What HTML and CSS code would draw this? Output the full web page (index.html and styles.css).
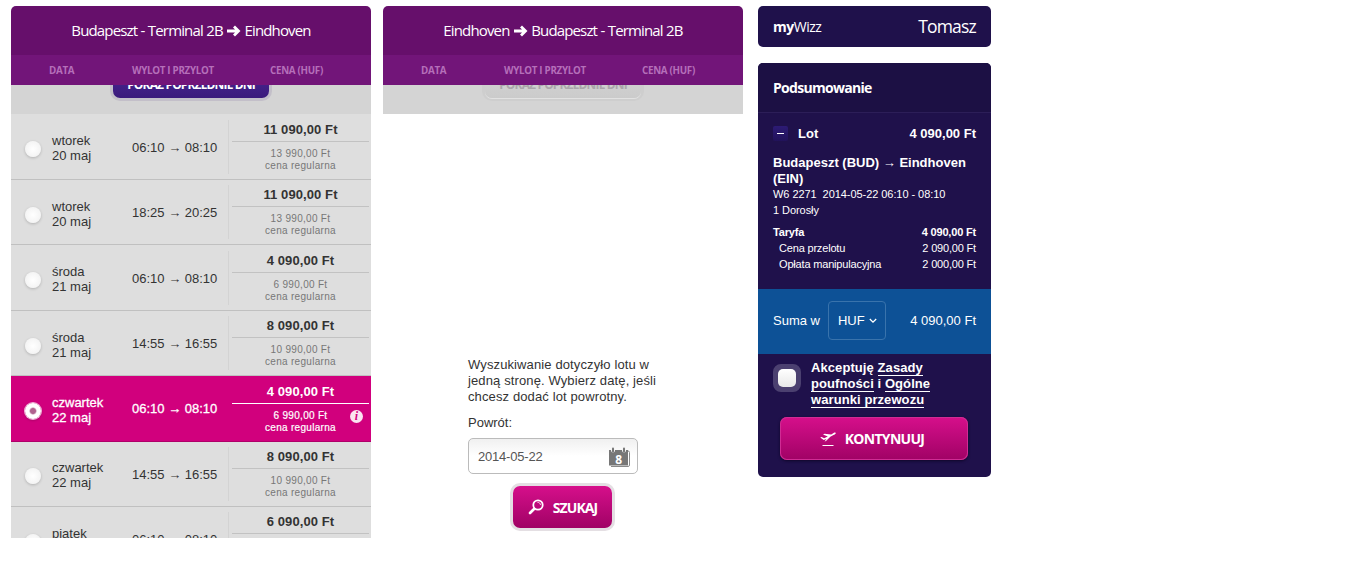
FILE: index.html
```html
<!DOCTYPE html>
<html lang="pl">
<head>
    <meta charset="UTF-8">
    <title>Wizz Air</title>
    <link rel="stylesheet" href="styles.css">
</head>
<body>
    <div class="page">
        <div class="flights">
            <div class="flights-title">Budapeszt - Terminal 2B <svg class="arrow" viewBox="0 0 15 12"><path d="M1 6h11M8 1.500L12.500 6L8 10.500"/></svg> Eindhoven</div>
            <div class="flights-head">
                <span class="head-date">DATA</span>
                <span class="head-time">WYLOT I PRZYLOT</span>
                <span class="head-price">CENA (HUF)</span>
            </div>
            <div class="prev-days">
                <button class="prev-button">POKAŻ POPRZEDNIE DNI</button>
            </div>
            <div class="flight-list">
                <div class="flight">
                    <span class="radio"></span>
                    <div class="date">wtorek<br>20 maj</div>
                    <div class="time">06:10 → 08:10</div>
                    <div class="price"><strong>11 090,00 Ft</strong><div class="regular">13 990,00 Ft<br>cena regularna</div></div>
                </div>
                <div class="flight">
                    <span class="radio"></span>
                    <div class="date">wtorek<br>20 maj</div>
                    <div class="time">18:25 → 20:25</div>
                    <div class="price"><strong>11 090,00 Ft</strong><div class="regular">13 990,00 Ft<br>cena regularna</div></div>
                </div>
                <div class="flight">
                    <span class="radio"></span>
                    <div class="date">środa<br>21 maj</div>
                    <div class="time">06:10 → 08:10</div>
                    <div class="price"><strong>4 090,00 Ft</strong><div class="regular">6 990,00 Ft<br>cena regularna</div></div>
                </div>
                <div class="flight">
                    <span class="radio"></span>
                    <div class="date">środa<br>21 maj</div>
                    <div class="time">14:55 → 16:55</div>
                    <div class="price"><strong>8 090,00 Ft</strong><div class="regular">10 990,00 Ft<br>cena regularna</div></div>
                </div>
                <div class="flight selected">
                    <span class="radio"></span>
                    <div class="date">czwartek<br>22 maj</div>
                    <div class="time">06:10 → 08:10</div>
                    <div class="price"><strong>4 090,00 Ft</strong><div class="regular">6 990,00 Ft<br>cena regularna</div><span class="info">i</span></div>
                </div>
                <div class="flight">
                    <span class="radio"></span>
                    <div class="date">czwartek<br>22 maj</div>
                    <div class="time">14:55 → 16:55</div>
                    <div class="price"><strong>8 090,00 Ft</strong><div class="regular">10 990,00 Ft<br>cena regularna</div></div>
                </div>
                <div class="flight">
                    <span class="radio"></span>
                    <div class="date">piątek</div>
                    <div class="time">06:10 → 08:10</div>
                    <div class="price"><strong>6 090,00 Ft</strong></div>
                </div>
            </div>
        </div>

        <div class="flights">
            <div class="flights-title">Eindhoven <svg class="arrow" viewBox="0 0 15 12"><path d="M1 6h11M8 1.500L12.500 6L8 10.500"/></svg> Budapeszt - Terminal 2B</div>
            <div class="flights-head">
                <span class="head-date">DATA</span>
                <span class="head-time">WYLOT I PRZYLOT</span>
                <span class="head-price">CENA (HUF)</span>
            </div>
            <div class="prev-days">
                <button class="prev-button disabled">POKAŻ POPRZEDNIE DNI</button>
            </div>
            <div class="return-form">
                <p>Wyszukiwanie dotyczyło lotu w<br>jedną stronę. Wybierz datę, jeśli<br>chcesz dodać lot powrotny.</p>
                <label>Powrót:</label>
                <div class="date-input">
                    <span>2014-05-22</span>
                    <svg class="calendar" viewBox="0 0 22 20">
                        <path d="M3 4h17a1.500 1.500 0 0 1 1.500 1.500V18a1.500 1.500 0 0 1-1.500 1.500H3" fill="#fff" stroke="#8a8a8a"/>
                        <rect x="1" y="3" width="19" height="15.500" fill="#777"/>
                        <path d="M3 0v3.500a2 2 0 0 0 4 0V0zM14 0v3.500a2 2 0 0 0 4 0V0z" fill="#f6f6f6"/>
                        <path d="M5 1.500v3M16 1.500v3" stroke="#777" stroke-width="2" stroke-linecap="round"/>
                        <text x="10.500" y="16.500" text-anchor="middle">8</text>
                    </svg>
                </div>
                <button class="pink-button search-button">
                    <svg class="magnifier" viewBox="0 0 16 16"><circle cx="10" cy="6" r="4.700"/><path class="handle" d="M6 10L2 14"/><path class="shine" d="M9.500 3.500a2.500 2.500 0 0 1 3 2.500"/></svg>
                    <span>SZUKAJ</span>
                </button>
            </div>
        </div>

        <div class="sidebar">
            <div class="user-bar">
                <span class="my-wizz"><b>my</b>Wizz</span>
                <span class="user-name">Tomasz</span>
            </div>
            <div class="summary">
                <div class="summary-title">Podsumowanie</div>
                <div class="summary-body">
                    <div class="summary-flight">
                        <span class="toggle"></span>
                        <span class="flight-label">Lot</span>
                        <span class="flight-total">4 090,00 Ft</span>
                    </div>
                    <div class="route">Budapeszt (BUD) → Eindhoven (EIN)</div>
                    <div class="details">W6 2271&nbsp; 2014-05-22 06:10 - 08:10<br>1 Dorosły</div>
                    <div class="fares">
                        <div class="fare main"><span>Taryfa</span><span>4 090,00 Ft</span></div>
                        <div class="fare"><span>Cena przelotu</span><span>2 090,00 Ft</span></div>
                        <div class="fare"><span>Opłata manipulacyjna</span><span>2 000,00 Ft</span></div>
                    </div>
                </div>
                <div class="total">
                    <span>Suma w</span>
                    <div class="currency">HUF <svg viewBox="0 0 8 6"><path d="M0.800 1L4 4.200L7.200 1"/></svg></div>
                    <span class="total-price">4 090,00 Ft</span>
                </div>
                <div class="terms">
                    <span class="checkbox"></span>
                    <div class="terms-text">Akceptuję <a>Zasady</a><br><a>poufności</a> i <a>Ogólne</a><br><a>warunki przewozu</a></div>
                </div>
                <button class="pink-button continue-button">
                    <svg class="plane" viewBox="0 0 16 14"><path d="M.2 5.400l1.500-.4 2.400 1.300L7.800 4.500 3 2.600l1.600-.8 6.600.7L13.600 1c1.200-.7 2.400-.5 2.200.2-.2.700-1.200 1.300-2.300 1.900L10.300 4.800 6 9l-1.400.6L6.400 6.900 3.700 8z"/><path d="M2.500 13h11v1h-11z"/></svg>
                    <span>KONTYNUUJ</span>
                </button>
            </div>
        </div>
    </div>
</body>
</html>
```
FILE: styles.css
```css
body {
    margin: 0;
    background-color: #fff;
    font-family: "Liberation Sans", Arial, sans-serif;
    font-size: 13px;
    color: #333;
}

button {
    border: none;
    padding: 0;
    font-family: "Open Sans", sans-serif;
    font-weight: bold;
    white-space: nowrap;
}

.page {
    display: flex;
    align-items: flex-start;
    padding: 6px 0 0 11px;
}

.flights {
    width: 360px;
    margin-right: 12px;
}

.flights-title {
    height: 49px;
    line-height: 49px;
    border-radius: 5px 5px 0 0;
    background-color: #660f6b;
    color: #fff;
    font-family: "Open Sans", sans-serif;
    font-size: 15px;
    letter-spacing: -0.85px;
    word-spacing: 0.3px;
    text-align: center;
    white-space: nowrap;
}

.arrow {
    width: 15px;
    height: 12px;
    vertical-align: -1px;
    fill: none;
    stroke: #fff;
    stroke-width: 2.8;
}

.flights-head {
    display: flex;
    height: 30px;
    line-height: 31px;
    background-color: #721579;
    color: #b56fb9;
    font-family: "Open Sans", sans-serif;
    font-size: 9.8px;
    font-weight: bold;
    letter-spacing: -0.3px;
    white-space: nowrap;
}

.head-date {
    width: 83px;
    padding-left: 38px;
}

.head-time {
    width: 138px;
}

.prev-days {
    display: flex;
    justify-content: center;
    align-items: flex-end;
    height: 13px;
    padding-bottom: 16px;
    overflow: hidden;
    background-color: #d4d4d4;
}

.prev-button {
    flex-shrink: 0;
    width: 156px;
    height: 38px;
    padding-top: 10px;
    border-radius: 7px;
    background: linear-gradient(#512d9c, #3a1a7c);
    box-shadow: 0 0 0 3px #c3bfc9;
    color: #fff;
    font-size: 12px;
    letter-spacing: -0.85px;
}

.prev-button.disabled {
    background: linear-gradient(#d8d8d8, #cbcbcb);
    box-shadow: 0 1px 0 #e2e2e2, 0 0 0 3px #cecece;
    color: #aaa6aa;
}

.flight-list {
    box-sizing: border-box;
    height: 424px;
    padding-top: 0.7px;
    background-color: #dedede;
    overflow: hidden;
}

.flight {
    display: flex;
    align-items: center;
    box-sizing: border-box;
    height: 65.4px;
    border-bottom: 1px solid #c0c0c0;
    background-color: #dedede;
}

.flight:last-child {
    align-items: flex-start;
}

.radio {
    box-sizing: border-box;
    width: 16px;
    height: 16px;
    margin: 5px 11px 0 14px;
    border-radius: 50%;
    background: radial-gradient(#fff, #efefef);
    box-shadow: 0 1px 3px rgba(0, 0, 0, 0.2);
}

.flight:last-child .radio {
    margin-top: 27px;
}

.date {
    width: 80px;
    padding-top: 3px;
    line-height: 15px;
}

.flight:last-child .date {
    padding-top: 19px;
}

.time {
    width: 96px;
    height: 54px;
    line-height: 56px;
    border-right: 1px solid #d3d3d3;
    white-space: nowrap;
}

.flight:last-child .time {
    margin-top: 5px;
}

.price {
    position: relative;
    width: 137px;
    height: 64px;
    margin: -1.8px 0 0 3px;
    text-align: center;
    white-space: nowrap;
}

.flight:last-child .price {
    margin-top: -0.7px;
}

.price strong {
    display: block;
    height: 27px;
    line-height: 31px;
    border-bottom: 1px solid #c2c2c2;
    letter-spacing: 0.1px;
}

.regular {
    padding-top: 6px;
    color: #777;
    font-size: 10px;
    letter-spacing: 0.3px;
    line-height: 12px;
}

.selected {
    background-color: #d1007d;
    border-bottom-color: #b00069;
    color: #fff;
}

.selected .date {
    -webkit-text-stroke: 0.3px #fff;
}

.selected .time {
    border-right-color: transparent;
    -webkit-text-stroke: 0.3px #fff;
}

.selected .radio {
    background: radial-gradient(#b0628f 0 2.500px, #fff 4px);
    box-shadow: 0 0 0 1px #f0b5d8, 0 1px 3px rgba(0, 0, 0, 0.3);
}

.selected strong {
    border-bottom-color: #fff;
}

.selected .regular {
    color: #fff;
    -webkit-text-stroke: 0.2px #fff;
}

.info {
    position: absolute;
    right: 6px;
    top: 34px;
    width: 13px;
    height: 13px;
    border-radius: 50%;
    background-color: #fbe3f1;
    color: #d1007d;
    font-family: "Liberation Serif", serif;
    font-size: 12px;
    font-style: italic;
    font-weight: bold;
    line-height: 13px;
}

.return-form {
    padding: 243px 0 0 85px;
    line-height: 16px;
}

.return-form p {
    margin: 0 0 10px;
    letter-spacing: 0.12px;
    white-space: nowrap;
}

.return-form label {
    display: block;
    margin-bottom: 7px;
}

.date-input {
    display: flex;
    justify-content: space-between;
    align-items: center;
    box-sizing: border-box;
    width: 170px;
    height: 36px;
    padding: 1px 7px 0 9px;
    border: 1px solid #bbb;
    border-radius: 5px;
    background: linear-gradient(#f0f0f0, #fff 50%);
    color: #555;
    letter-spacing: -0.2px;
}

.calendar {
    width: 22px;
    height: 20px;
}

.calendar text {
    fill: #fff;
    font-family: "Open Sans", sans-serif;
    font-size: 12px;
    font-weight: bold;
}

.pink-button {
    display: flex;
    justify-content: center;
    align-items: center;
    border-radius: 7px;
    background: linear-gradient(#d60f8b, #a00265);
    color: #fff;
    font-size: 14px;
    letter-spacing: -0.9px;
}

.search-button {
    width: 99px;
    height: 42px;
    margin: 12px 0 0 45px;
    gap: 9px;
    box-shadow: 0 0 0 3px #e4dfe3;
}

.magnifier {
    width: 16px;
    height: 16px;
    fill: none;
    stroke: #fff;
    stroke-width: 1.8;
}

.magnifier .handle {
    stroke-width: 2.6;
    stroke-linecap: round;
}

.magnifier .shine {
    stroke-width: 0.8;
}

.sidebar {
    width: 233px;
    margin-left: 3px;
    color: #fff;
}

.user-bar {
    display: flex;
    justify-content: space-between;
    align-items: center;
    height: 41px;
    margin-bottom: 16px;
    padding: 0 15px;
    border-radius: 5px;
    background-color: #1f114b;
    font-family: "Open Sans", sans-serif;
}

.my-wizz {
    font-size: 14px;
    letter-spacing: -0.5px;
}

.user-name {
    padding-bottom: 2px;
    font-size: 17.5px;
    letter-spacing: -0.8px;
}

.summary {
    height: 414px;
    border-radius: 5px;
    background-color: #1f114b;
    overflow: hidden;
}

.summary-title {
    height: 49px;
    padding-left: 15px;
    line-height: 49px;
    border-bottom: 1px solid #2c1e58;
    background-color: #1c1044;
    font-family: "Open Sans", sans-serif;
    font-size: 14px;
    font-weight: bold;
    letter-spacing: -0.7px;
}

.summary-body {
    box-sizing: border-box;
    height: 176px;
    padding: 12px 15px 0;
}

.summary-flight {
    display: flex;
    align-items: center;
    height: 16px;
    margin-bottom: 14px;
    font-weight: bold;
}

.toggle {
    display: flex;
    align-items: center;
    justify-content: center;
    width: 15px;
    height: 15px;
    margin-right: 10px;
    border-radius: 2px;
    background: linear-gradient(#2d1b75, #21125a);
}

.toggle::before {
    content: "";
    width: 7px;
    height: 1px;
    background-color: #fff;
}

.flight-total {
    margin-left: auto;
}

.route {
    font-weight: bold;
    line-height: 16px;
}

.details {
    margin-top: -1px;
    font-size: 11px;
    letter-spacing: -0.06px;
    line-height: 16px;
}

.fares {
    margin-top: 6px;
    font-size: 11px;
    letter-spacing: -0.18px;
    line-height: 16px;
}

.fare {
    display: flex;
    justify-content: space-between;
    padding-left: 6px;
}

.fare.main {
    padding-left: 0;
    font-weight: bold;
}

.total {
    display: flex;
    align-items: center;
    box-sizing: border-box;
    height: 65px;
    padding: 0 15px 2px;
    background-color: #0d5196;
}

.currency {
    display: flex;
    align-items: center;
    box-sizing: border-box;
    width: 58px;
    height: 39px;
    margin-left: 8px;
    padding-left: 9px;
    gap: 4px;
    border: 1px solid #3973ac;
    border-radius: 4px;
}

.currency svg {
    width: 8px;
    height: 6px;
    fill: none;
    stroke: #fff;
    stroke-width: 1.3;
}

.total-price {
    margin-left: auto;
}

.terms {
    display: flex;
    align-items: flex-start;
    height: 53px;
    padding: 6px 15px 4px;
}

.checkbox {
    box-sizing: border-box;
    width: 28px;
    height: 28px;
    margin: 4px 10px 0 0;
    border: 5px solid #4b4070;
    border-radius: 8px;
    background: #4b4070;
}

.checkbox::before {
    content: "";
    display: block;
    height: 18px;
    border-radius: 5px;
    background: linear-gradient(#fff, #e8e8e8);
}

.terms-text {
    font-weight: bold;
    letter-spacing: 0.08px;
    line-height: 16px;
    white-space: nowrap;
}

.terms-text a {
    display: inline-block;
    height: 15px;
    line-height: 16px;
    border-bottom: 1px solid #fff;
    vertical-align: top;
}

.continue-button {
    width: 188px;
    height: 43px;
    margin-left: 22px;
    padding-right: 4px;
    gap: 9px;
    box-shadow: inset 0 0 0 1px #d02c94, 0 1px 3px #0e0628;
}

.continue-button span {
    letter-spacing: -0.7px;
}

.plane {
    width: 16px;
    height: 14px;
    fill: #fff;
}
```
